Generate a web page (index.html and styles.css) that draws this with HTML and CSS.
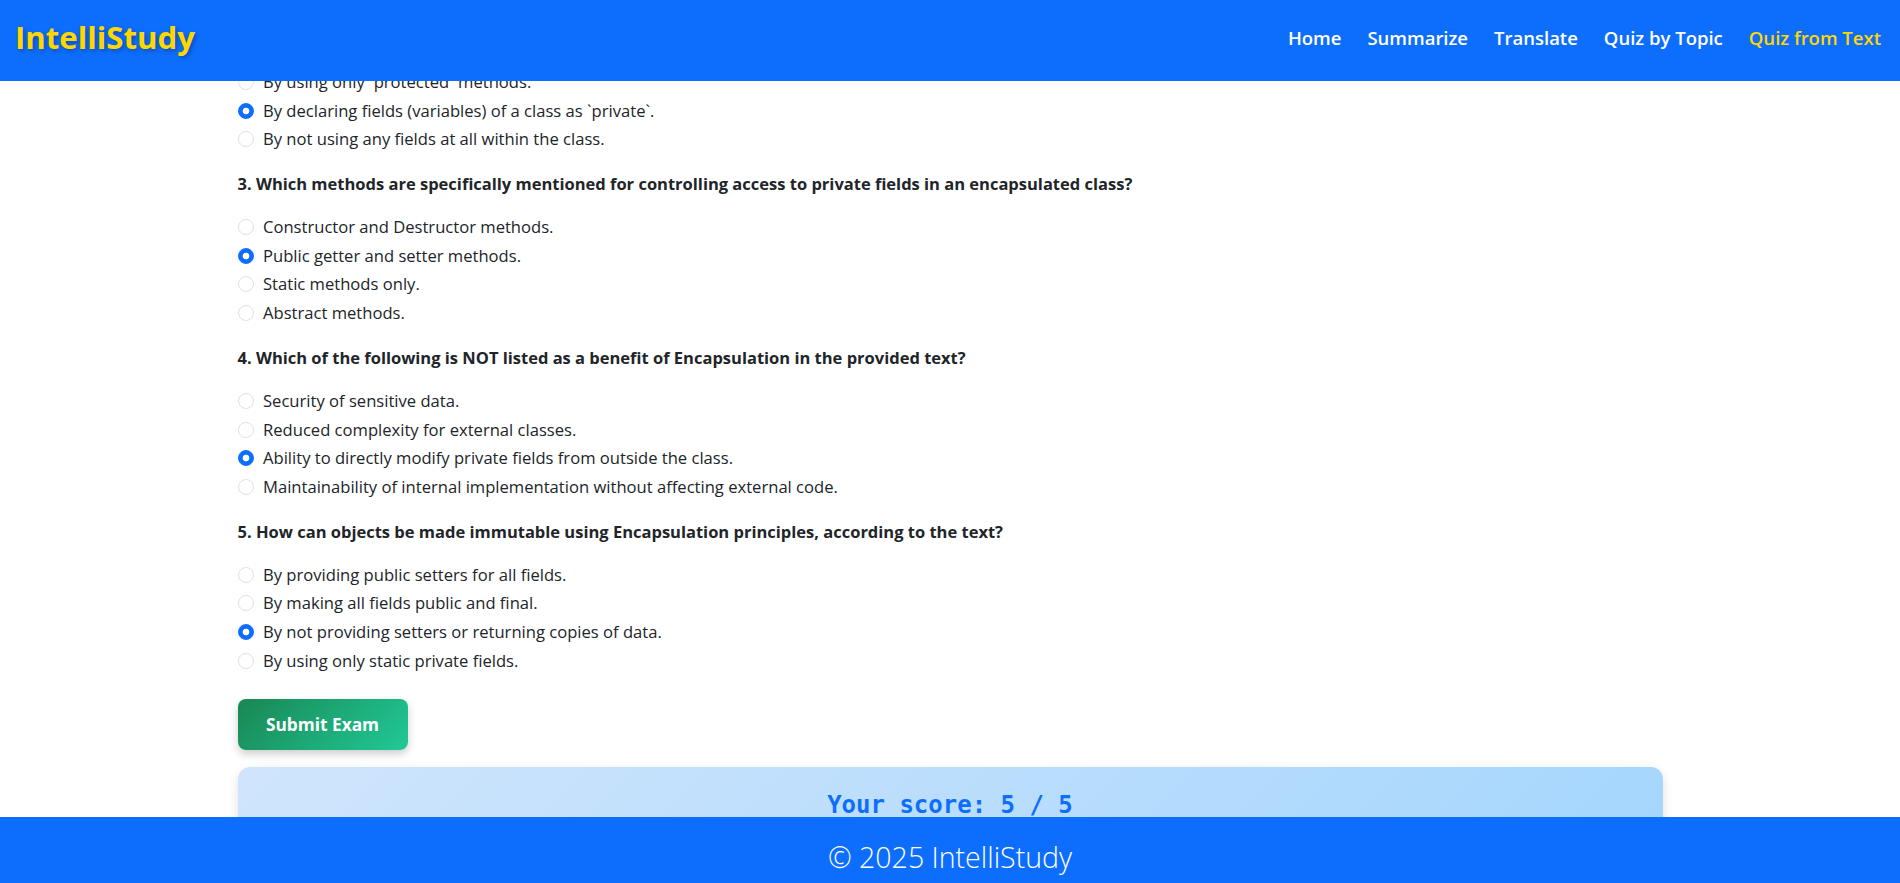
FILE: index.html
```html
<!DOCTYPE html>
<html lang="en">
<head>
<meta charset="utf-8">
<title>IntelliStudy - Quiz from Text</title>
<link rel="stylesheet" href="styles.css">
</head>
<body>
<header class="topbar">
  <a class="brand" href="#">IntelliStudy</a>
  <nav class="nav">
    <a class="nav-link" href="#">Home</a>
    <a class="nav-link" href="#">Summarize</a>
    <a class="nav-link" href="#">Translate</a>
    <a class="nav-link" href="#">Quiz by Topic</a>
    <a class="nav-link active" href="#">Quiz from Text</a>
  </nav>
</header>

<main class="container">
  <form class="exam">
    <div class="question">
      <label class="option"><input type="radio" name="q2"><span>By using only `protected` methods.</span></label>
      <label class="option"><input type="radio" name="q2" checked><span>By declaring fields (variables) of a class as `private`.</span></label>
      <label class="option"><input type="radio" name="q2"><span>By not using any fields at all within the class.</span></label>
    </div>

    <div class="question">
      <p class="q-title">3. Which methods are specifically mentioned for controlling access to private fields in an encapsulated class?</p>
      <label class="option"><input type="radio" name="q3"><span>Constructor and Destructor methods.</span></label>
      <label class="option"><input type="radio" name="q3" checked><span>Public getter and setter methods.</span></label>
      <label class="option"><input type="radio" name="q3"><span>Static methods only.</span></label>
      <label class="option"><input type="radio" name="q3"><span>Abstract methods.</span></label>
    </div>

    <div class="question">
      <p class="q-title">4. Which of the following is NOT listed as a benefit of Encapsulation in the provided text?</p>
      <label class="option"><input type="radio" name="q4"><span>Security of sensitive data.</span></label>
      <label class="option"><input type="radio" name="q4"><span>Reduced complexity for external classes.</span></label>
      <label class="option"><input type="radio" name="q4" checked><span>Ability to directly modify private fields from outside the class.</span></label>
      <label class="option"><input type="radio" name="q4"><span>Maintainability of internal implementation without affecting external code.</span></label>
    </div>

    <div class="question">
      <p class="q-title">5. How can objects be made immutable using Encapsulation principles, according to the text?</p>
      <label class="option"><input type="radio" name="q5"><span>By providing public setters for all fields.</span></label>
      <label class="option"><input type="radio" name="q5"><span>By making all fields public and final.</span></label>
      <label class="option"><input type="radio" name="q5" checked><span>By not providing setters or returning copies of data.</span></label>
      <label class="option"><input type="radio" name="q5"><span>By using only static private fields.</span></label>
    </div>

    <button type="button" class="submit-btn">Submit Exam</button>
  </form>

  <section class="result-card">
    <h2 class="score">Your score: 5 / 5</h2>
  </section>
</main>

<footer class="footer">© 2025 IntelliStudy</footer>
</body>
</html>
```
FILE: styles.css
```css
* { box-sizing: border-box; }

html, body {
  margin: 0;
  height: 100%;
  overflow: hidden;
}

body {
  font-family: "Open Sans", "Noto Sans", sans-serif;
  color: #212529;
  background: #fff;
}

/* ---------- header ---------- */
.topbar {
  position: fixed;
  top: 0;
  left: 0;
  right: 0;
  z-index: 10;
  height: 81px;
  background: #0d6efd;
  display: flex;
  align-items: center;
  justify-content: space-between;
  padding: 0 19px 6px 15px;
}

.brand {
  font-size: 31.2px;
  font-weight: 700;
  color: #ffd700;
  text-decoration: none;
  text-shadow: 2px 2px 4px rgba(0, 0, 0, 0.3);
  line-height: 1.2;
}

.nav {
  display: flex;
  align-items: center;
  gap: 26px;
}

.nav-link {
  color: #fff;
  text-decoration: none;
  font-size: 18.5px;
  font-weight: 600;
  line-height: 1.5;
}

.nav-link.active {
  color: #ffd700;
}

/* ---------- main ---------- */
.container {
  width: 75%;
  margin: 0 auto;
  padding-top: 70px;
}

.question {
  padding-bottom: 16px;
}

.q-title {
  margin: 0 0 19px;
  font-size: 16.5px;
  font-weight: 700;
  line-height: 24px;
  color: #212529;
}

.option {
  display: flex;
  align-items: center;
  gap: 9.5px;
  height: 24px;
  margin-bottom: 4.7px;
  font-size: 16.6px;
  line-height: 24px;
  color: #212529;
}

.option input {
  appearance: none;
  -webkit-appearance: none;
  margin: 0;
  width: 16px;
  height: 16px;
  flex: 0 0 16px;
  border-radius: 50%;
  border: 1px solid #dee2e6;
  background: #fff;
}

.option input:checked {
  border-color: #0d6efd;
  background: radial-gradient(circle, #fff 0 3px, #0d6efd 3.7px);
}

.submit-btn {
  display: block;
  margin-top: 6px;
  width: 170px;
  height: 51px;
  border: none;
  border-radius: 8px;
  background: linear-gradient(135deg, #198754, #20c997);
  color: #fff;
  font-family: inherit;
  font-size: 17.3px;
  font-weight: 700;
  box-shadow: 0 4px 8px rgba(0, 0, 0, 0.2);
}

.result-card {
  margin-top: 17px;
  padding: 24px;
  border-radius: 12px;
  background: linear-gradient(135deg, #d0e5fc, #a5d6fd);
  box-shadow: 0 4px 12px rgba(0, 0, 0, 0.12);
  text-align: center;
}

.score {
  margin: 0;
  font-family: "DejaVu Sans Mono", monospace;
  font-size: 24px;
  font-weight: 700;
  line-height: 28px;
  color: #0d6efd;
}

/* ---------- footer ---------- */
.footer {
  position: fixed;
  left: 0;
  right: 0;
  bottom: 0;
  z-index: 10;
  height: 66px;
  background: #0d6efd;
  color: #fff;
  text-align: center;
  font-size: 28.5px;
  font-weight: 300;
  line-height: 36px;
  padding-top: 22px;
}
```
